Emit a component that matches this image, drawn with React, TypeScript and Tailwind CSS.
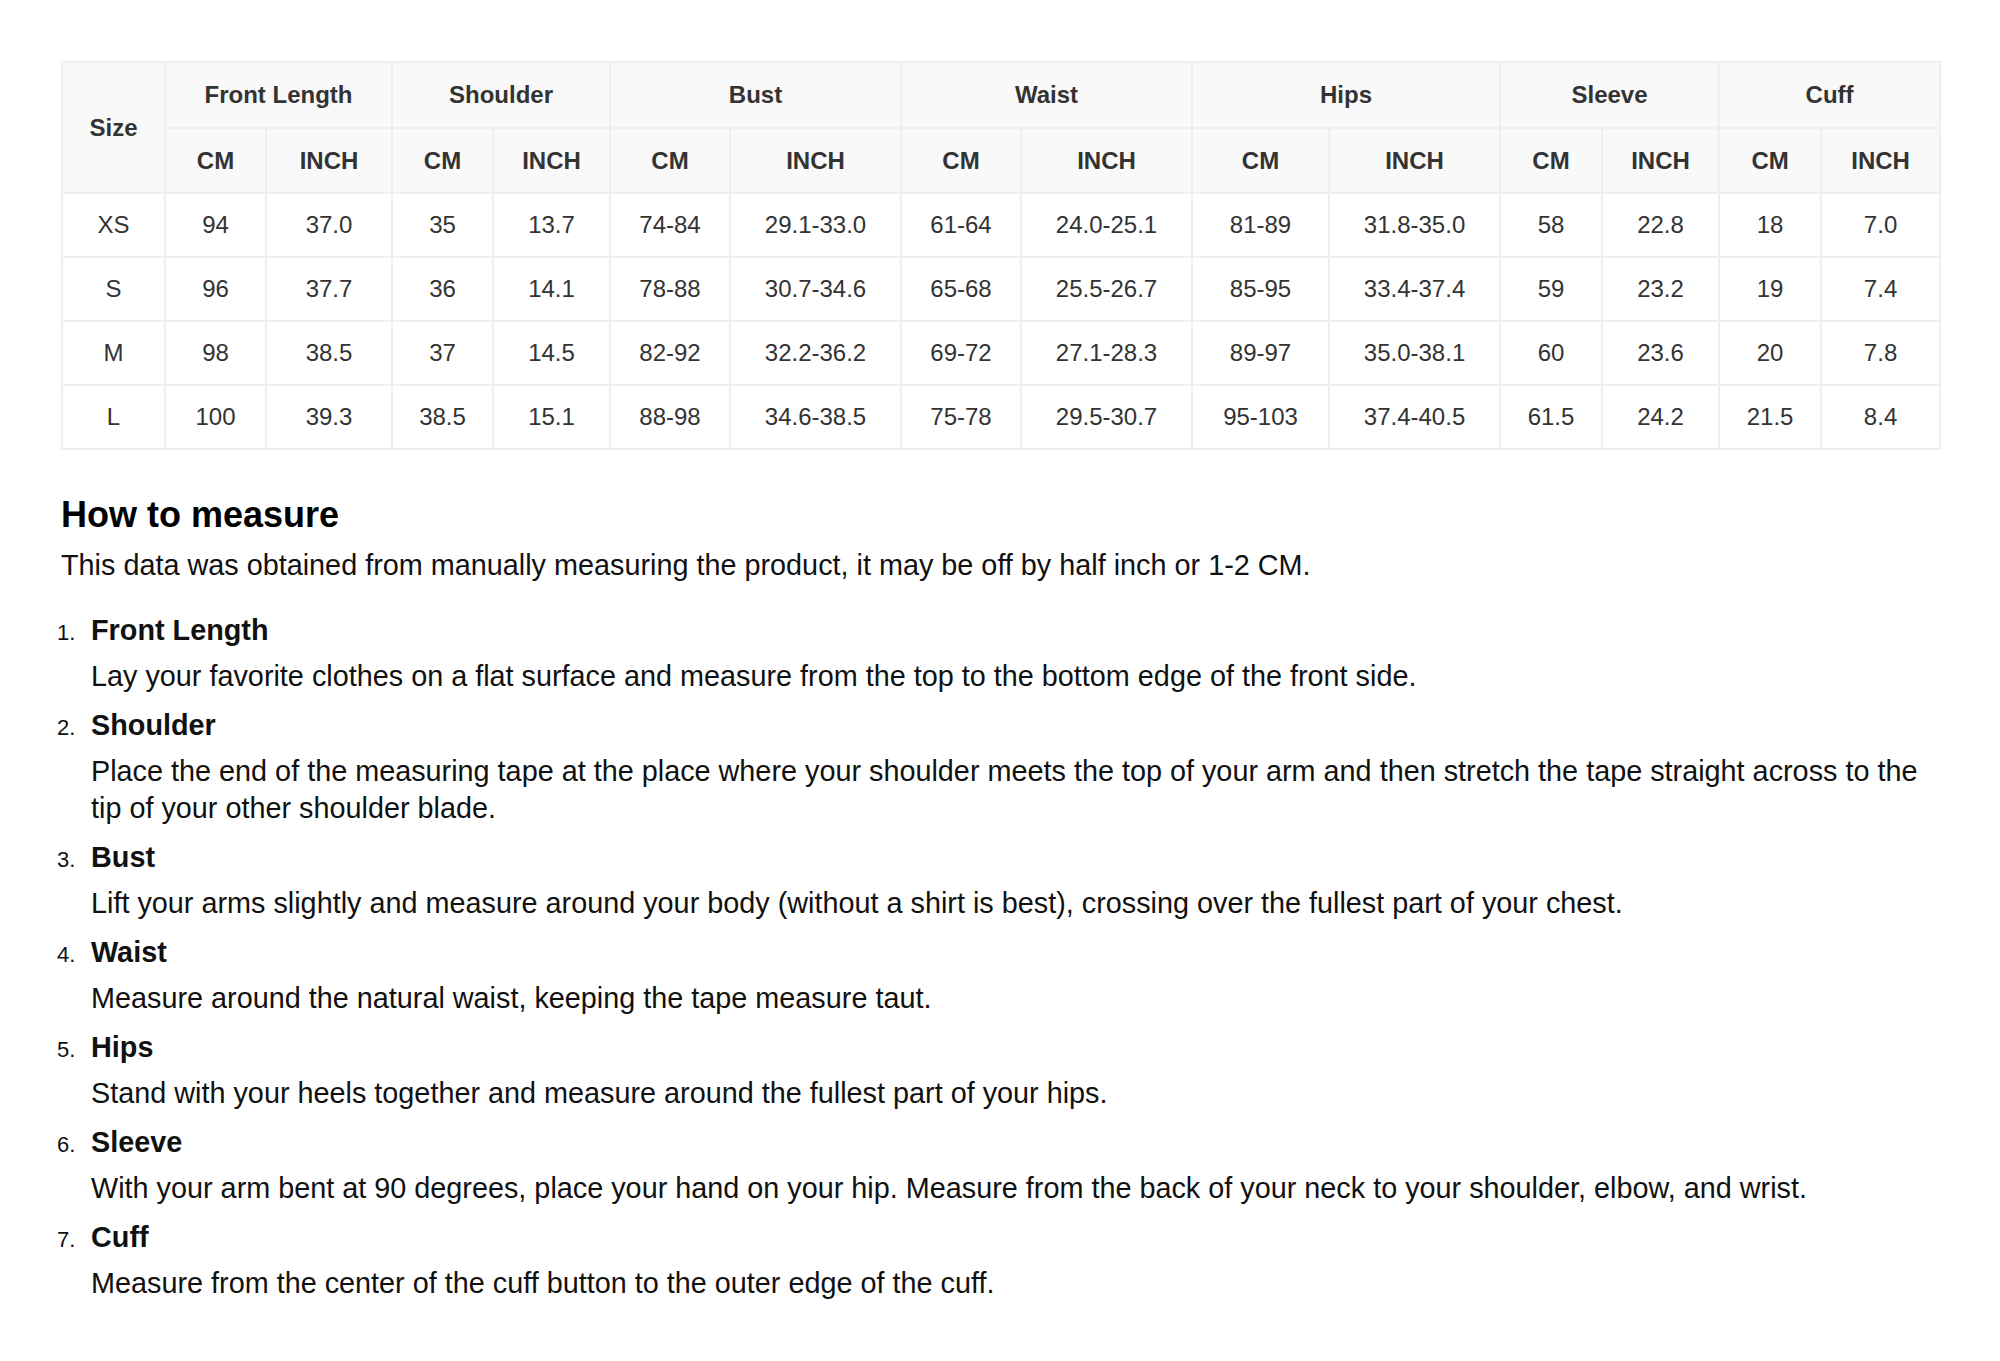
import * as React from "react";

const groups = ["Front Length", "Shoulder", "Bust", "Waist", "Hips", "Sleeve", "Cuff"];

// widths of every column, Size first, then CM / INCH pairs
const colWidths = [103, 101, 126, 101, 117, 120, 171, 120, 171, 137, 171, 102, 117, 102, 119];

const rows = [
  ["XS", "94", "37.0", "35", "13.7", "74-84", "29.1-33.0", "61-64", "24.0-25.1", "81-89", "31.8-35.0", "58", "22.8", "18", "7.0"],
  ["S", "96", "37.7", "36", "14.1", "78-88", "30.7-34.6", "65-68", "25.5-26.7", "85-95", "33.4-37.4", "59", "23.2", "19", "7.4"],
  ["M", "98", "38.5", "37", "14.5", "82-92", "32.2-36.2", "69-72", "27.1-28.3", "89-97", "35.0-38.1", "60", "23.6", "20", "7.8"],
  ["L", "100", "39.3", "38.5", "15.1", "88-98", "34.6-38.5", "75-78", "29.5-30.7", "95-103", "37.4-40.5", "61.5", "24.2", "21.5", "8.4"],
];

const steps = [
  {
    title: "Front Length",
    text: "Lay your favorite clothes on a flat surface and measure from the top to the bottom edge of the front side.",
  },
  {
    title: "Shoulder",
    text: "Place the end of the measuring tape at the place where your shoulder meets the top of your arm and then stretch the tape straight across to the tip of your other shoulder blade.",
  },
  {
    title: "Bust",
    text: "Lift your arms slightly and measure around your body (without a shirt is best), crossing over the fullest part of your chest.",
  },
  {
    title: "Waist",
    text: "Measure around the natural waist, keeping the tape measure taut.",
  },
  {
    title: "Hips",
    text: "Stand with your heels together and measure around the fullest part of your hips.",
  },
  {
    title: "Sleeve",
    text: "With your arm bent at 90 degrees, place your hand on your hip. Measure from the back of your neck to your shoulder, elbow, and wrist.",
  },
  {
    title: "Cuff",
    text: "Measure from the center of the cuff button to the outer edge of the cuff.",
  },
];

function SizeTable() {
  return (
    <table className="w-full table-fixed border-collapse border-2 border-[#efefef] text-[24px] text-[#333]">
      <colgroup>
        {colWidths.map((w, i) => (
          <col key={i} style={{ width: w }} />
        ))}
      </colgroup>
      <thead className="bg-[#f9f9f9] font-bold">
        <tr className="h-[66px]">
          <th rowSpan={2} className="border-2 border-[#efefef] text-center">
            Size
          </th>
          {groups.map((g) => (
            <th key={g} colSpan={2} className="border-2 border-[#efefef] text-center">
              {g}
            </th>
          ))}
        </tr>
        <tr className="h-[65px]">
          {groups.map((g) => (
            <React.Fragment key={g}>
              <th className="border-2 border-[#efefef] text-center">CM</th>
              <th className="border-2 border-[#efefef] text-center">INCH</th>
            </React.Fragment>
          ))}
        </tr>
      </thead>
      <tbody>
        {rows.map((r) => (
          <tr key={r[0]} className="h-[64px]">
            {r.map((c, i) => (
              <td key={i} className="border-2 border-[#efefef] text-center">
                {c}
              </td>
            ))}
          </tr>
        ))}
      </tbody>
    </table>
  );
}

export default function App() {
  return (
    <div className="min-h-screen bg-white px-[61px] pt-[61px] font-['Liberation_Sans',Arial,sans-serif] text-[#111]">
      <SizeTable />
      <h2 className="mt-[43px] text-[36px] font-bold leading-[1.2] text-black">How to measure</h2>
      <p className="mt-[11px] text-[28.8px] leading-[37px]">
        This data was obtained from manually measuring the product, it may be off by half inch or 1-2 CM.
      </p>
      <ol className="mt-[28px]">
        {steps.map((s, i) => (
          <li key={s.title} className="mb-[12px] flex">
            <span className="-ml-[4px] w-[34px] shrink-0 pt-[2px] text-[22px] leading-[37px]">{i + 1}.</span>
            <div className="flex-1">
              <div className="text-[28.8px] font-bold leading-[37px]">{s.title}</div>
              <p className="mt-[9px] text-[28.8px] leading-[37px]">{s.text}</p>
            </div>
          </li>
        ))}
      </ol>
    </div>
  );
}
